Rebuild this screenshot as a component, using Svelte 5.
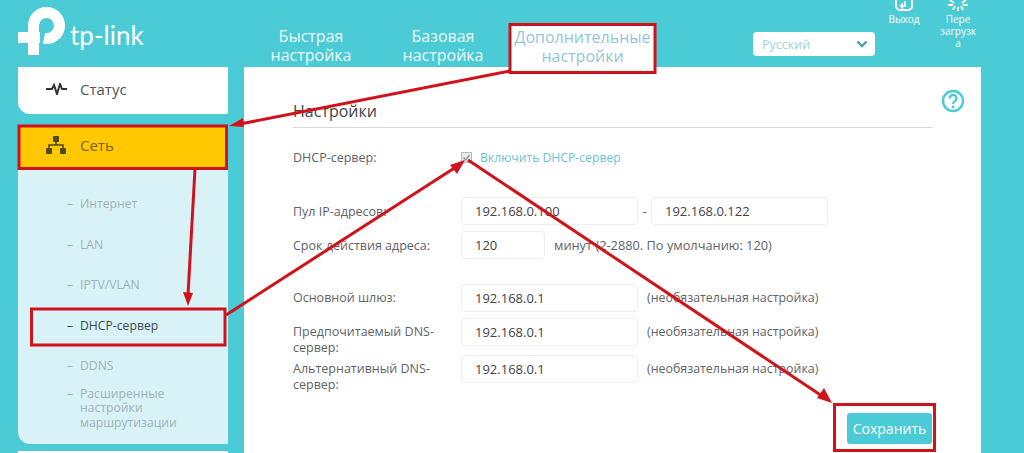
<script>
  const subItems = [
    { label: 'Интернет' },
    { label: 'LAN' },
    { label: 'IPTV/VLAN' },
    { label: 'DHCP-сервер', active: true },
    { label: 'DDNS' }
  ];

  const dnsRows = [
    { label: 'Основной шлюз:', value: '192.168.0.1' },
    { label: 'Предпочитаемый DNS-сервер:', value: '192.168.0.1' },
    { label: 'Альтернативный DNS-сервер:', value: '192.168.0.1' }
  ];
</script>

<div class="page">
  <header class="top">
    <div class="logo">
      <svg width="70" height="60" viewBox="0 0 70 60" aria-hidden="true">
        <path d="M44 38.300 A13 13 0 1 0 33.500 25.500 V55" fill="none" stroke="#fff" stroke-width="11" />
        <rect x="18" y="32" width="22" height="11" fill="#fff" />
      </svg>
      <span class="brand">tp-link</span>
    </div>

    <nav class="tabs">
      <a class="tab tab-quick" href="#/">Быстрая настройка</a>
      <a class="tab tab-basic" href="#/">Базовая настройка</a>
      <a class="tab tab-adv" href="#/">Дополнительные настройки</a>
    </nav>

    <div class="lang">
      <span>Русский</span>
      <svg width="12" height="8" viewBox="0 0 12 8" aria-hidden="true">
        <path d="M1.500 1.500 L6 6 L10.500 1.500" fill="none" stroke="#4a9fa8" stroke-width="2.400" />
      </svg>
    </div>

    <div class="tools">
      <div class="tool tool-exit">
        <svg width="20" height="12" viewBox="0 0 20 12" aria-hidden="true">
          <path d="M2 0 V6 A4 4 0 0 0 6 10 H14 A4 4 0 0 0 18 6 V0" fill="none" stroke="#fff" stroke-width="2" />
          <path d="M11 1 V6 H7 M9 3.500 L6.500 6 L9 8.500" fill="none" stroke="#fff" stroke-width="1.600" />
        </svg>
        <span>Выход</span>
      </div>
      <div class="tool tool-reboot">
        <svg width="22" height="12" viewBox="0 0 22 12" aria-hidden="true">
          <path d="M3 0 L7 3 M19 0 L15 3 M1 5 H6 M21 5 H16 M8 6 L6 10 M14 6 L16 10 M11 7 V11" stroke="#fff" stroke-width="1.800" />
        </svg>
        <span>Пере<br />загрузк<br />а</span>
      </div>
    </div>
  </header>

  <div class="main">
    <aside class="side">
      <a class="card status" href="#/">
        <svg width="22" height="12" viewBox="0 0 22 12" aria-hidden="true">
          <path d="M0 6 H6 L8 2 L11 11 L14 1 L16 6 H21" fill="none" stroke="#333" stroke-width="2" />
        </svg>
        <span>Статус</span>
      </a>

      <a class="card network" href="#/">
        <svg width="20" height="18" viewBox="0 0 20 18" aria-hidden="true">
          <rect x="7" y="0" width="6" height="6" rx="1" fill="#4f4a1e" />
          <rect x="0" y="12" width="6" height="6" rx="1" fill="#4f4a1e" />
          <rect x="14" y="12" width="6" height="6" rx="1" fill="#4f4a1e" />
          <path d="M3 12 V9 H17 V12 M10 6 V9" fill="none" stroke="#4f4a1e" stroke-width="1.600" />
        </svg>
        <span>Сеть</span>
      </a>

      <ul class="sub">
        {#each subItems as item}
          <li class:active={item.active}><span class="dash">–</span><span>{item.label}</span></li>
        {/each}
        <li class="long"><span class="dash">–</span><span>Расширенные настройки маршрутизации</span></li>
      </ul>

      <div class="card next"></div>
    </aside>

    <main class="content">
      <div class="head">
        <h2>Настройки</h2>
        <svg class="help" width="24" height="24" viewBox="0 0 24 24" aria-hidden="true">
          <circle cx="12" cy="12" r="10" fill="none" stroke="#4acbd6" stroke-width="2.400" />
          <path d="M8.600 9.500 A3.400 3.400 0 1 1 13.600 12.400 C12.400 13.100 12 13.600 12 15" fill="none" stroke="#4acbd6" stroke-width="2.200" />
          <circle cx="12" cy="18" r="1.400" fill="#4acbd6" />
        </svg>
      </div>

      <div class="row row-dhcp">
        <span class="label">DHCP-сервер:</span>
        <span class="box">
          <svg width="9" height="9" viewBox="0 0 9 9" aria-hidden="true">
            <path d="M1.500 4.500 L3.800 7 L7.500 2" fill="none" stroke="#8a9499" stroke-width="1.300" />
          </svg>
        </span>
        <span class="enable">Включить DHCP-сервер</span>
      </div>

      <div class="row row-pool">
        <span class="label">Пул IP-адресов:</span>
        <span class="field wide">192.168.0.100</span>
        <span class="sep">-</span>
        <span class="field wide">192.168.0.122</span>
      </div>

      <div class="row row-lease">
        <span class="label">Срок действия адреса:</span>
        <span class="field short">120</span>
        <span class="hint lease">минут (2-2880. По умолчанию: 120)</span>
      </div>

      <div class="dns">
        {#each dnsRows as row}
          <div class="dns-row">
            <span class="label narrow">{row.label}</span>
            <span class="field wide">{row.value}</span>
            <span class="hint opt">(необязательная настройка)</span>
          </div>
        {/each}
      </div>

      <div class="actions">
        <button type="button">Сохранить</button>
      </div>
    </main>
  </div>

  <!-- red annotations drawn on top of the screenshot -->
  <svg class="marks" width="1024" height="453" viewBox="0 0 1024 453" aria-hidden="true">
    <g fill="none" stroke="#d0121b" stroke-width="3">
      <rect x="510" y="24.500" width="145" height="48" />
      <rect x="19" y="126" width="207.500" height="42.500" />
      <rect x="31.500" y="309" width="193.500" height="36" />
      <rect x="834.500" y="404.500" width="100" height="46" />
      <path d="M510 71 L240 124" />
      <path d="M195 169 L188 295" />
      <path d="M226 315 L456 167" />
      <path d="M468 160 L822 396" />
    </g>
    <g fill="#d0121b">
      <path d="M229 126 L243 118 L244 127 Z" />
      <path d="M188 306 L183 292 L193 293 Z" />
      <path d="M465 160 L450 165 L457 174 Z" />
      <path d="M832 403 L817 398 L824 388 Z" />
    </g>
  </svg>
</div>

<style>
  :global(body) {
    margin: 0;
    background: #4acbd6;
  }

  .page {
    position: relative;
    width: 1024px;
    height: 453px;
    overflow: hidden;
    background: #4acbd6;
    font-family: "Open Sans", "Liberation Sans", sans-serif;
    font-size: 12.500px;
    color: #5f6468;
  }

  .top {
    display: flex;
    height: 67px;
    color: #fff;
  }

  .logo {
    display: flex;
    align-items: flex-start;
    width: 243px;
    box-sizing: border-box;
  }

  .brand {
    margin-top: 20px;
    font-family: "Lato", "Open Sans", sans-serif;
    font-size: 26px;
    line-height: 30px;
  }

  .tabs {
    display: flex;
    width: 510px;
  }

  .tab {
    box-sizing: border-box;
    width: 84px;
    padding-top: 27px;
    color: #fff;
    text-align: center;
    text-decoration: none;
    font-size: 16px;
    line-height: 19px;
    opacity: 0.9;
  }

  .tab-quick {
    margin-left: 26px;
  }

  .tab-basic {
    margin-left: 48px;
  }

  .tab-adv {
    position: relative;
    z-index: 1;
    width: 145px;
    height: 47px;
    margin-top: 25px;
    margin-left: 25px;
    padding-top: 3px;
    background: #fff;
    color: #8fc9d2;
    opacity: 1;
  }

  .lang {
    display: flex;
    align-items: center;
    justify-content: space-between;
    box-sizing: border-box;
    width: 122px;
    height: 24px;
    margin-top: 32px;
    padding: 0 7px 0 9px;
    background: #fff;
    border-radius: 4px;
    color: #9bd6de;
  }

  .tools {
    display: flex;
    margin-left: 13px;
    font-size: 10px;
    line-height: 12px;
    text-align: center;
  }

  .tool {
    display: flex;
    flex-direction: column;
    align-items: center;
  }

  .tool-exit {
    width: 32px;
  }

  .tool-reboot {
    width: 40px;
    margin-left: 18px;
  }

  .tool span {
    margin-top: 1px;
  }

  .main {
    display: flex;
    gap: 16px;
    padding-left: 18px;
  }

  .side {
    width: 210px;
    flex: none;
  }

  .card {
    display: flex;
    align-items: center;
    gap: 12px;
    padding-left: 28px;
    color: #555;
    text-decoration: none;
    font-size: 15px;
  }

  .status {
    box-sizing: border-box;
    height: 47px;
    padding-bottom: 3px;
    background: #fff;
    border-bottom-left-radius: 12px;
  }

  .network {
    box-sizing: border-box;
    height: 44px;
    margin-top: 11px;
    padding-bottom: 5px;
    gap: 14px;
    background: #ffc800;
    color: #75651a;
  }

  .sub {
    box-sizing: border-box;
    height: 275px;
    margin: 0;
    padding: 15px 0 0 48px;
    list-style: none;
    background: #d8f2f7;
    border-bottom-left-radius: 12px;
    color: #9fb3b9;
    font-size: 12.200px;
    line-height: 14.500px;
  }

  .sub li {
    display: flex;
    height: 40.500px;
    align-items: center;
  }

  .sub li.active {
    color: #3c4a50;
  }

  .sub li.long {
    height: auto;
    align-items: flex-start;
    width: 140px;
  }

  .dash {
    flex: none;
    width: 14px;
    margin-left: 1px;
    margin-right: -1px;
  }

  .next {
    height: 20px;
    margin-top: 7px;
    background: #fff;
  }

  .content {
    box-sizing: border-box;
    width: 737px;
    height: 386px;
    padding: 0 48px 0 49px;
    background: #fff;
  }

  .head {
    position: relative;
    height: 60px;
    border-bottom: 1px solid #d5d9dc;
  }

  h2 {
    margin: 0;
    padding-top: 34px;
    font-size: 16px;
    font-weight: 400;
    line-height: 20px;
    color: #444;
  }

  .help {
    position: absolute;
    right: -32px;
    top: 22px;
  }

  .row {
    display: flex;
    align-items: center;
  }

  .label {
    flex: none;
    width: 168px;
  }

  .label.narrow {
    width: 142px;
    margin-right: 26px;
    padding-top: 6px;
    line-height: 15.500px;
  }

  .row-dhcp {
    height: 22px;
    margin-top: 18px;
  }

  .box {
    display: flex;
    width: 9px;
    height: 9px;
    border: 1px solid #b4bcc0;
    background: #e6e9ea;
    margin-right: 8px;
  }

  .enable {
    color: #6cc4d0;
    font-size: 12.200px;
  }

  .row-pool {
    margin-top: 29px;
  }

  .row-lease {
    margin-top: 6px;
  }

  .field {
    flex: none;
    box-sizing: border-box;
    height: 28px;
    padding-left: 13px;
    border: 1px solid #eceff1;
    border-radius: 4px;
    color: #444;
    font-size: 13px;
    line-height: 26px;
  }

  .wide {
    width: 177px;
  }

  .short {
    width: 84px;
  }

  .sep {
    width: 13px;
    text-align: center;
  }

  .hint {
    margin-left: 9px;
  }

  .lease {
    font-size: 12.800px;
  }

  .dns {
    display: flex;
    flex-direction: column;
    margin-top: 25px;
  }

  .dns-row {
    display: flex;
    align-items: flex-start;
    height: 28px;
    margin-bottom: 6px;
  }

  .dns-row:last-child {
    margin-top: 3px;
    margin-bottom: 0;
  }

  .opt {
    font-size: 12.400px;
    line-height: 28px;
  }

  .actions {
    display: flex;
    justify-content: flex-end;
    margin-top: 30px;
    margin-right: 1px;
  }

  button {
    width: 85px;
    height: 31px;
    padding: 0;
    border: none;
    border-radius: 3px;
    background: #4acbd6;
    color: #fff;
    font: inherit;
    font-size: 14px;
  }

  .marks {
    position: absolute;
    left: 0;
    top: 0;
    z-index: 2;
  }
</style>
